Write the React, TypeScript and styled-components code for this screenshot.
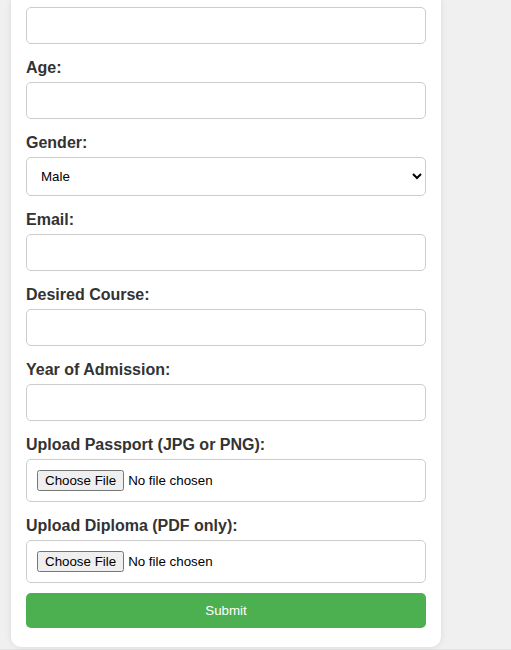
import React from "react";
import styled, { createGlobalStyle } from "styled-components";

const GlobalStyle = createGlobalStyle`
  html, body {
    margin: 0;
    padding: 0;
    background: #f0f0f0;
    font-family: "Liberation Sans", Arial, sans-serif;
  }
  * { box-sizing: border-box; }
`;

const Page = styled.div`
  padding: 0 0 2px 11px;
  border-bottom: 1px solid #e2e2e2;
`;

const Card = styled.form`
  width: 430px;
  background: #fff;
  padding: 7px 15px 19px;
  border-radius: 0 0 10px 10px;
  box-shadow: 0 0 6px rgba(0, 0, 0, 0.1);
`;

const Label = styled.label`
  display: block;
  font-weight: bold;
  font-size: 16px;
  color: #333;
  margin-bottom: 5px;
`;

const fieldBase = `
  display: block;
  width: 100%;
  padding: 10px;
  border: 1px solid #ccc;
  border-radius: 5px;
  font-family: "Liberation Sans", Arial, sans-serif;
  font-size: 13.333px;
  background: #fff;
  color: #000;
`;

const TextInput = styled.input`
  ${fieldBase}
  margin-bottom: 15px;
`;

const Select = styled.select`
  ${fieldBase}
  margin-bottom: 15px;
`;

const FileInput = styled.input<{ $last?: boolean }>`
  ${fieldBase}
  margin-bottom: ${(p) => (p.$last ? "10px" : "15px")};
`;

const Submit = styled.button`
  display: block;
  width: 100%;
  padding: 10px;
  border: none;
  border-radius: 5px;
  background: #4caf50;
  color: #fff;
  font-family: "Liberation Sans", Arial, sans-serif;
  font-size: 13.333px;
  font-weight: normal;
  cursor: pointer;
`;

export default function App() {
  return (
    <>
      <GlobalStyle />
      <Page>
        <Card onSubmit={(e) => e.preventDefault()}>
          <TextInput type="text" />
          <Label>Age:</Label>
          <TextInput type="number" />
          <Label>Gender:</Label>
          <Select defaultValue="Male">
            <option>Male</option>
            <option>Female</option>
          </Select>
          <Label>Email:</Label>
          <TextInput type="email" />
          <Label>Desired Course:</Label>
          <TextInput type="text" />
          <Label>Year of Admission:</Label>
          <TextInput type="number" />
          <Label>Upload Passport (JPG or PNG):</Label>
          <FileInput type="file" accept=".jpg,.png" />
          <Label>Upload Diploma (PDF only):</Label>
          <FileInput type="file" accept=".pdf" $last />
          <Submit type="submit">Submit</Submit>
        </Card>
      </Page>
    </>
  );
}
